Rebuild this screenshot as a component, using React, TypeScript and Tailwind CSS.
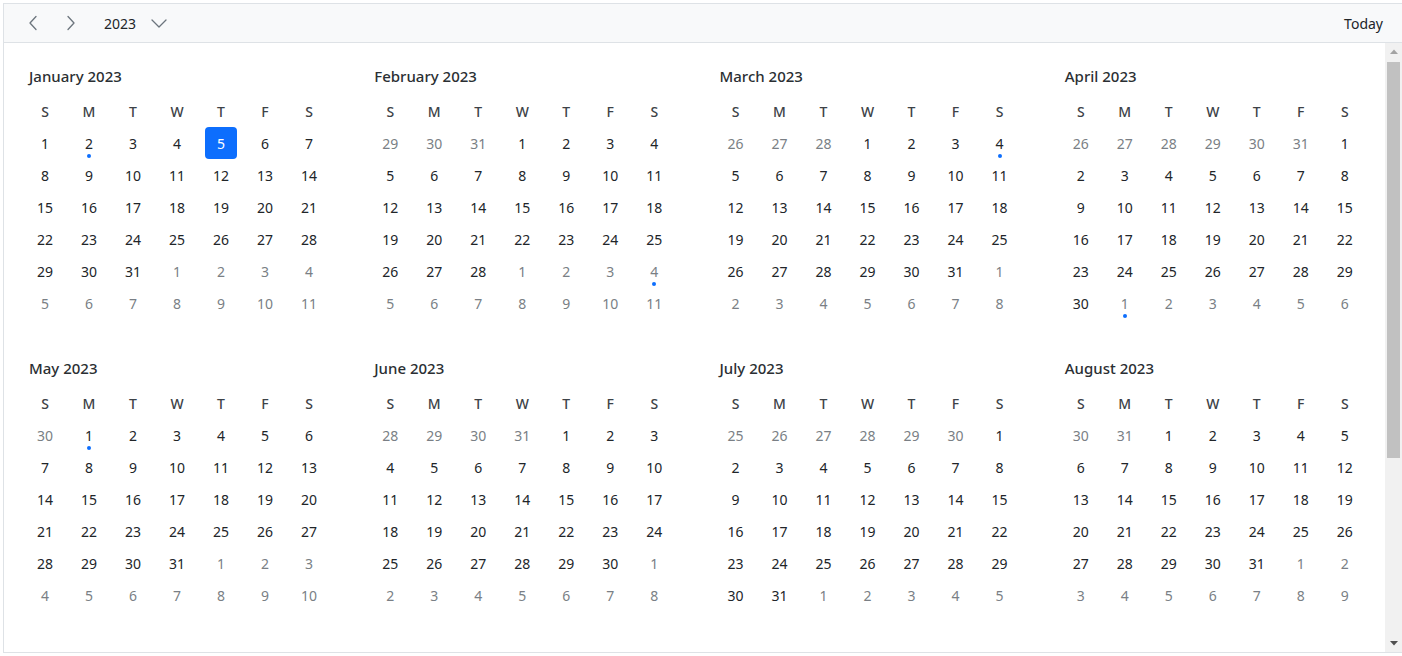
import React from "react";

const YEAR = 2023;
const MONTHS = [
  "January", "February", "March", "April", "May", "June",
  "July", "August", "September", "October", "November", "December",
];
const WEEKDAYS = ["S", "M", "T", "W", "T", "F", "S"];

// Days that carry an event marker (month is zero-based)
const EVENTS = new Set(["2023-0-2", "2023-2-4", "2023-4-1"]);
const SELECTED = "2023-0-5";

type Cell = { key: string; day: number; inMonth: boolean };

function buildMonth(year: number, month: number): Cell[] {
  const first = new Date(year, month, 1);
  const start = new Date(year, month, 1 - first.getDay());
  const cells: Cell[] = [];
  for (let i = 0; i < 42; i++) {
    const d = new Date(start.getFullYear(), start.getMonth(), start.getDate() + i);
    cells.push({
      key: `${d.getFullYear()}-${d.getMonth()}-${d.getDate()}`,
      day: d.getDate(),
      inMonth: d.getMonth() === month,
    });
  }
  return cells;
}

function ChevronLeft() {
  return (
    <svg width="14" height="18" viewBox="0 0 14 18" fill="none">
      <path d="M10 2.5 L4 9 L10 15.5" stroke="#6c757d" strokeWidth="1.3" strokeLinecap="round" strokeLinejoin="round" />
    </svg>
  );
}

function ChevronRight() {
  return (
    <svg width="14" height="18" viewBox="0 0 14 18" fill="none">
      <path d="M4 2.5 L10 9 L4 15.5" stroke="#6c757d" strokeWidth="1.3" strokeLinecap="round" strokeLinejoin="round" />
    </svg>
  );
}

function ChevronDown() {
  return (
    <svg width="18" height="12" viewBox="0 0 18 12" fill="none">
      <path d="M2 3 L9 10 L16 3" stroke="#6c757d" strokeWidth="1.3" strokeLinecap="round" strokeLinejoin="round" />
    </svg>
  );
}

function Month({ month }: { month: number }) {
  const cells = buildMonth(YEAR, month);
  return (
    <div className="pl-[19px] pt-[22px] pb-[16px]">
      <div className="pl-[6px] h-[22px] leading-[22px] text-[15px] font-medium text-[#2b2f33]">
        {MONTHS[month]} {YEAR}
      </div>
      <div className="mt-[8px] grid grid-cols-[repeat(7,44px)]">
        {WEEKDAYS.map((w, i) => (
          <div key={i} className="h-[32px] flex items-center justify-center text-[14px] font-medium text-[#3d4247]">
            {w}
          </div>
        ))}
        {cells.map((c, i) => {
          const selected = c.key === SELECTED;
          const event = EVENTS.has(c.key);
          return (
            <div key={i} className="h-[32px] flex items-center justify-center">
              <div
                className={
                  "relative w-[32px] h-[32px] flex items-center justify-center rounded-[4px] text-[14px] " +
                  (selected
                    ? "bg-[#0d6efd] text-white"
                    : c.inMonth
                    ? "text-[#212529]"
                    : "text-[#7a7f85]")
                }
              >
                {c.day}
                {event && (
                  <span className="absolute left-[14px] top-[27px] w-[4px] h-[4px] rounded-full bg-[#0d6efd]" />
                )}
              </div>
            </div>
          );
        })}
      </div>
    </div>
  );
}

// Classic vertical scrollbar next to the month list
function ScrollBar() {
  return (
    <div className="w-[17px] shrink-0 bg-[#f1f1f1] flex flex-col">
      <div className="h-[17px] flex items-center justify-center">
        <svg width="8" height="5" viewBox="0 0 8 5">
          <path d="M0 5 L4 0.5 L8 5 Z" fill="#a3a3a3" />
        </svg>
      </div>
      <div className="flex-1 px-[2px] pt-[2px]">
        <div className="h-[396px] bg-[#c1c1c1]" />
      </div>
      <div className="h-[17px] flex items-center justify-center">
        <svg width="8" height="5" viewBox="0 0 8 5">
          <path d="M0 0 L8 0 L4 4.5 Z" fill="#505050" />
        </svg>
      </div>
    </div>
  );
}

export default function App() {
  return (
    <div className="pt-[3px] pl-[3px] font-['Segoe_UI','Noto_Sans',sans-serif] bg-white">
      <div className="h-[650px] flex flex-col border-l border-t border-b border-[#dee2e6]">
        <div className="h-[39px] shrink-0 flex items-center bg-[#f8f9fa] border-b border-[#dee2e6] pl-[17px] pr-[18px]">
          <button className="w-[24px] h-[28px] flex items-center justify-center">
            <ChevronLeft />
          </button>
          <button className="ml-[14px] w-[24px] h-[28px] flex items-center justify-center">
            <ChevronRight />
          </button>
          <button className="ml-[21px] flex items-center gap-[14px] text-[14px] text-[#212529]">
            <span>2023</span>
            <ChevronDown />
          </button>
          <button className="ml-auto mr-[1px] text-[14px] text-[#212529]">Today</button>
        </div>
        <div className="flex-1 min-h-0 flex">
          <div className="flex-1 min-w-0 overflow-hidden">
            <div className="grid grid-cols-4">
              {MONTHS.map((_, m) => (
                <Month key={m} month={m} />
              ))}
            </div>
          </div>
          <ScrollBar />
        </div>
      </div>
    </div>
  );
}
